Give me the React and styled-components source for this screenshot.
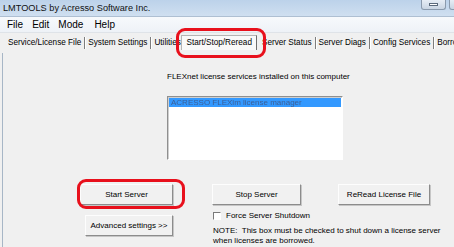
import React from "react";
import styled, { createGlobalStyle, css } from "styled-components";

const GlobalStyle = createGlobalStyle`
  html, body {
    margin: 0;
    padding: 0;
    background: #f0f0f0;
    overflow: hidden;
  }
  body {
    font-family: "Liberation Sans", Arial, sans-serif;
    color: #000;
  }
`;

const Window = styled.div`
  width: 454px;
  height: 247px;
  display: flex;
  flex-direction: column;
  overflow: hidden;
  background: #f0f0f0;
`;

const TitleBar = styled.div`
  height: 17px;
  flex-shrink: 0;
  display: flex;
  align-items: flex-start;
  justify-content: space-between;
  background: linear-gradient(#bcd2ea, #cfdff0);
  border-bottom: 1px solid #aebfd2;
  box-sizing: border-box;
`;

const Title = styled.span`
  font-size: 9.2px;
  line-height: 16px;
  padding-left: 3px;
  color: #111;
`;

const Controls = styled.div`
  display: flex;
  gap: 3px;
  margin-right: -20px;
`;

const CtrlButton = styled.div`
  width: 25px;
  height: 10px;
  border: 1px solid #8a9aad;
  border-top: none;
  border-radius: 0 0 3px 3px;
  background: linear-gradient(#e6edf5, #c9d5e3);
  display: flex;
  align-items: center;
  justify-content: center;
  box-sizing: border-box;
`;

const MinGlyph = styled.div`
  width: 9px;
  height: 3px;
  background: #fff;
  border: 1px solid #5b6a7c;
  box-sizing: border-box;
`;

const MenuBar = styled.div`
  height: 15px;
  flex-shrink: 0;
  display: flex;
  align-items: center;
  gap: 9px;
  padding-left: 7px;
  font-size: 10px;
  background: linear-gradient(#f7f9fc, #eef2f7);
  border-bottom: 1px solid #dfe3e8;
`;

const MenuItem = styled.span`
  line-height: 14px;
  margin-right: ${(p) => (p.$extra ? "2px" : "0")};
`;

const TabStrip = styled.div`
  height: 20px;
  flex-shrink: 0;
  display: flex;
  align-items: center;
  padding-left: 5px;
  font-size: 8.2px;
  white-space: nowrap;
`;

const Tab = styled.div`
  height: 12px;
  line-height: 12px;
  padding: 0 3px;
  border-right: ${(p) => (p.$last ? "none" : "1px solid #7d7d7d")};
  box-shadow: ${(p) => (p.$last ? "none" : "1px 0 0 #fff")};
  overflow: hidden;
  flex-shrink: 0;
  ${(p) =>
    p.$clip &&
    css`
      width: ${p.$clip}px;
      padding-right: 0;
      border-right: none;
      box-shadow: none;
    `}
`;

const Annotated = styled.div`
  position: relative;
  flex-shrink: 0;
  &::after {
    content: "";
    position: absolute;
    top: ${(p) => p.$t}px;
    left: ${(p) => p.$l}px;
    right: ${(p) => p.$r}px;
    bottom: ${(p) => p.$b}px;
    border: 3px solid #e8101c;
    border-radius: 9px;
    pointer-events: none;
    z-index: 2;
  }
`;

const ActiveTab = styled.div`
  height: 15px;
  line-height: 14px;
  padding: 0 4px;
  margin: 0 2px 2px 0;
  background: #f9f9f9;
  border: 1px solid #b4b4b4;
  border-right-color: #6e6e6e;
  border-bottom: none;
  box-sizing: border-box;
`;

const Content = styled.div`
  flex: 1;
  margin-left: 2px;
  border-left: 1px solid #a7b6c6;
  padding-top: 19px;
  display: flex;
  flex-direction: column;
  font-size: 8px;
`;

const ServicePanel = styled.div`
  padding-left: 164px;
`;

const Label = styled.div`
  line-height: 10px;
  white-space: nowrap;
`;

const ListBox = styled.div`
  margin-top: 14px;
  width: 176px;
  height: 64px;
  background: #fff;
  border: 1px solid #fff;
  border-top-color: #8f8f8f;
  border-left-color: #8f8f8f;
  box-shadow: inset 1px 1px 0 #cfcfcf;
  box-sizing: border-box;
  padding: 1px;
`;

const ListItem = styled.div`
  height: 9px;
  line-height: 9px;
  background: ${(p) => (p.$selected ? "#3399ff" : "transparent")};
  padding-left: 2px;
  color: #3d5f95;
  filter: blur(0.6px);
  white-space: nowrap;
`;

const ActionGrid = styled.div`
  margin-top: 24px;
  padding-left: 77px;
  display: grid;
  grid-template-columns: 132px 126px 1fr;
  align-items: start;
`;

const Button = styled.button`
  width: ${(p) => p.$w || 90}px;
  height: 21px;
  padding: 0;
  font-family: inherit;
  font-size: 8px;
  color: #000;
  background: #f1f1f1;
  border: 1px solid;
  border-color: #fdfdfd #8c8c8c #8c8c8c #fdfdfd;
  box-shadow: 1px 1px 0 #c6c6c6;
  box-sizing: border-box;
  display: block;
`;

const SecondaryButton = styled(Button)`
  grid-column: 1;
  grid-row: 2 / 4;
  margin: 10px 0 0 5px;
`;

const CheckRow = styled.label`
  grid-column: 2 / 4;
  grid-row: 2;
  margin-top: 6px;
  display: flex;
  align-items: center;
  gap: 5px;
  line-height: 10px;
  padding-left: 1px;
`;

const CheckBox = styled.span`
  width: 8px;
  height: 8px;
  background: #fff;
  border: 1px solid #fff;
  border-top-color: #7a7a7a;
  border-left-color: #7a7a7a;
  box-sizing: border-box;
`;

const Note = styled.div`
  grid-column: 2 / 4;
  grid-row: 3;
  margin-top: 5px;
  line-height: 10px;
  padding-left: 1px;
  white-space: pre;
`;

const tabs = ["Service/License File", "System Settings"];
const moreTabs = ["Server Status", "Server Diags", "Config Services"];

export default function App() {
  return (
    <Window>
      <GlobalStyle />
      <TitleBar>
        <Title>LMTOOLS by Acresso Software Inc.</Title>
        <Controls>
          <CtrlButton>
            <MinGlyph />
          </CtrlButton>
          <CtrlButton />
        </Controls>
      </TitleBar>
      <MenuBar>
        <MenuItem>File</MenuItem>
        <MenuItem>Edit</MenuItem>
        <MenuItem $extra>Mode</MenuItem>
        <MenuItem>Help</MenuItem>
      </MenuBar>
      <TabStrip>
        {tabs.map((t) => (
          <Tab key={t}>{t}</Tab>
        ))}
        <Tab $clip={27}>Utilities</Tab>
        <Annotated $t={-7} $l={-5} $r={-7} $b={-6}>
          <ActiveTab>Start/Stop/Reread</ActiveTab>
        </Annotated>
        {moreTabs.map((t) => (
          <Tab key={t}>{t}</Tab>
        ))}
        <Tab $last>Borrowing</Tab>
      </TabStrip>
      <Content>
        <ServicePanel>
          <Label>FLEXnet license services installed on this computer</Label>
          <ListBox>
            <ListItem $selected>ACRESSO FLEXlm license manager</ListItem>
          </ListBox>
        </ServicePanel>
        <ActionGrid>
          <Annotated $t={-5} $l={-3} $r={-12} $b={-4} style={{ width: 93 }}>
            <Button $w={93}>Start Server</Button>
          </Annotated>
          <Button $w={89}>Stop Server</Button>
          <Button $w={92}>ReRead License File</Button>
          <SecondaryButton $w={88}>Advanced settings &gt;&gt;</SecondaryButton>
          <CheckRow>
            <CheckBox />
            Force Server Shutdown
          </CheckRow>
          <Note>
            {"NOTE:  This box must be checked to shut down a license server\nwhen licenses are borrowed."}
          </Note>
        </ActionGrid>
      </Content>
    </Window>
  );
}
